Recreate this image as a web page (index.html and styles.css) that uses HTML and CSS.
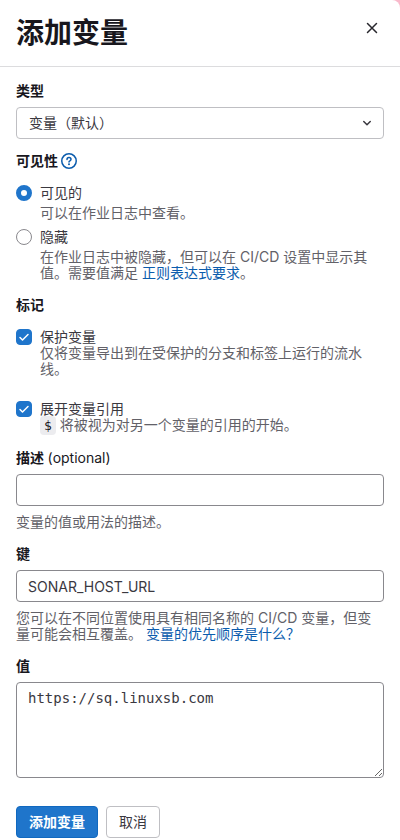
FILE: index.html
```html
<!DOCTYPE html>
<html lang="zh-CN">
<head>
    <meta charset="UTF-8">
    <meta name="viewport" content="width=device-width, initial-scale=1.0">
    <title>添加变量</title>
    <link rel="stylesheet" href="styles.css">
</head>
<body>
    <div class="drawer">
        <header class="drawer-header">
            <h1>添加变量</h1>
            <button type="button" class="close-button" aria-label="关闭">
                <svg width="16" height="16" viewBox="0 0 16 16" fill="none" stroke="currentColor" stroke-width="1.5" stroke-linecap="round">
                    <path d="M3.5 3.5l9 9M12.5 3.5l-9 9"/>
                </svg>
            </button>
        </header>

        <form class="drawer-body">
            <div class="form-group type-group">
                <label class="form-label" for="type">类型</label>
                <div class="select-wrapper">
                    <select id="type" class="form-control form-select">
                        <option>变量（默认）</option>
                    </select>
                    <svg class="select-icon" width="16" height="16" viewBox="0 0 16 16" fill="none" stroke="currentColor" stroke-width="1.5" stroke-linecap="round" stroke-linejoin="round">
                        <path d="M4.75 6.5L8 9.75l3.25-3.25"/>
                    </svg>
                </div>
            </div>

            <fieldset class="form-group">
                <legend class="form-legend">
                    可见性
                    <a href="#" class="help-link" aria-label="帮助">
                        <svg width="16" height="16" viewBox="0 0 16 16" fill="none" stroke="currentColor" stroke-width="1.5">
                            <circle cx="8" cy="8" r="7.25"/>
                            <path d="M6 6.4c0-1.1.9-1.9 2-1.9s2 .8 2 1.8c0 .8-.5 1.2-1.1 1.6-.6.3-.9.6-.9 1.2" stroke-linecap="round"/>
                            <circle cx="8" cy="11.3" r="1" fill="currentColor" stroke="none"/>
                        </svg>
                    </a>
                </legend>
                <div class="option-list">
                    <div class="option option-radio">
                        <input type="radio" id="visible" name="visibility" checked>
                        <label for="visible">可见的</label>
                        <p class="help-text">可以在作业日志中查看。</p>
                    </div>
                    <div class="option option-radio">
                        <input type="radio" id="masked" name="visibility">
                        <label for="masked">隐藏</label>
                        <p class="help-text">在作业日志中被隐藏，但可以在 CI/CD 设置中显示其值。需要值满足 <a href="#">正则表达式要求</a>。</p>
                    </div>
                </div>
            </fieldset>

            <fieldset class="form-group">
                <legend class="form-legend">标记</legend>
                <div class="option-list flags">
                    <div class="option">
                        <input type="checkbox" id="protected" checked>
                        <label for="protected">保护变量</label>
                        <p class="help-text">仅将变量导出到在受保护的分支和标签上运行的流水线。</p>
                    </div>
                    <div class="option">
                        <input type="checkbox" id="expanded" checked>
                        <label for="expanded">展开变量引用</label>
                        <p class="help-text"><code>$</code> 将被视为对另一个变量的引用的开始。</p>
                    </div>
                </div>
            </fieldset>

            <div class="form-group">
                <label class="form-label" for="description">描述 <span class="optional">(optional)</span></label>
                <input type="text" id="description" class="form-control">
                <p class="help-text">变量的值或用法的描述。</p>
            </div>

            <div class="form-group">
                <label class="form-label" for="key">键</label>
                <input type="text" id="key" class="form-control" value="SONAR_HOST_URL">
                <p class="help-text">您可以在不同位置使用具有相同名称的 CI/CD 变量，但变量可能会相互覆盖。 <a href="#">变量的优先顺序是什么？</a></p>
            </div>

            <div class="form-group">
                <label class="form-label" for="value">值</label>
                <textarea id="value" class="form-control value-input" spellcheck="false">https://sq.linuxsb.com</textarea>
            </div>

            <div class="actions">
                <button type="button" class="btn btn-confirm">添加变量</button>
                <button type="button" class="btn">取消</button>
            </div>
        </form>
    </div>
</body>
</html>
```
FILE: styles.css
```css
* {
    box-sizing: border-box;
}
body {
    margin: 0;
    background-color: #f9b9cb;
    font-family: Inter, 'Noto Sans CJK SC', sans-serif;
    font-size: 14px;
    line-height: 16px;
    color: #3a383f;
}
.drawer {
    min-height: 100vh;
    background: #fff;
    border-top-right-radius: 8px;
}
.drawer-header {
    display: flex;
    justify-content: space-between;
    align-items: flex-start;
    padding: 16px;
    border-bottom: 1px solid #dcdcde;
}
h1 {
    margin: 0;
    font-size: 28px;
    line-height: 34px;
    font-weight: 600;
    color: #18171d;
}
.close-button {
    display: flex;
    padding: 4px;
    border: 0;
    background: none;
    color: #28272d;
}
.drawer-body {
    padding: 16px 16px 2px;
}
.form-group {
    min-width: 0;
    margin: 0 0 16px;
    padding: 0;
    border: 0;
}
.type-group {
    margin-bottom: 14px;
}
.form-label {
    display: block;
    margin-bottom: 8px;
    font-weight: 600;
    color: #18171d;
}
.form-legend {
    display: flex;
    align-items: center;
    gap: 3px;
    margin-bottom: 16px;
    padding: 0;
    font-weight: 600;
    color: #18171d;
}
.optional {
    font-weight: 400;
}
.help-link {
    display: flex;
}
a {
    color: #0b5cad;
    text-decoration: none;
}
.form-control {
    display: block;
    width: 100%;
    height: 32px;
    padding: 0 11px;
    border: 1px solid #89888d;
    border-radius: 4px;
    background: #fff;
    color: #3a383f;
    font: inherit;
}
.select-wrapper {
    display: grid;
    align-items: center;
}
.form-select {
    grid-area: 1 / 1;
    padding: 0 12px;
    border-color: #bfbfc3;
    appearance: none;
}
.select-icon {
    grid-area: 1 / 1;
    justify-self: end;
    margin-right: 9px;
    pointer-events: none;
}
.help-text {
    margin: 8px 0 0;
    color: #626168;
}
.option-list {
    display: grid;
    gap: 8px;
}
.flags {
    gap: 24px;
}
.option {
    display: grid;
    grid-template-columns: 16px 1fr;
    column-gap: 8px;
}
.option-radio {
    row-gap: 4px;
}
.option .help-text {
    grid-column: 2;
    margin: 0;
}
.option input {
    width: 16px;
    height: 16px;
    margin: 0;
    border: 1px solid #89888d;
    background: #fff;
    appearance: none;
}
.option input[type="radio"] {
    border-radius: 50%;
}
.option input[type="radio"]:checked {
    border: 5px solid #1f75cb;
}
.option input[type="checkbox"] {
    border-radius: 4px;
}
.option input[type="checkbox"]:checked {
    border-color: #1f75cb;
    background: #1f75cb url("data:image/svg+xml,%3Csvg xmlns='http://www.w3.org/2000/svg' viewBox='0 0 14 14'%3E%3Cpath d='M3 7.5l2.5 2.5L11 4.5' fill='none' stroke='white' stroke-width='1.5' stroke-linecap='round' stroke-linejoin='round'/%3E%3C/svg%3E");
}
code {
    padding: 2px 4px;
    border-radius: 4px;
    background: #ececef;
    color: #18171d;
    font-family: 'DejaVu Sans Mono', monospace;
    font-size: 13px;
}
.value-input {
    height: 96px;
    padding: 7px 11px;
    font-family: 'DejaVu Sans Mono', monospace;
}
.actions {
    display: flex;
    gap: 8px;
    margin-top: 28px;
}
.btn {
    height: 32px;
    padding: 0 12px;
    border: 1px solid #bfbfc3;
    border-radius: 4px;
    background: #fff;
    color: #3a383f;
    font: inherit;
}
.btn-confirm {
    border-color: #1068bf;
    background: #1f75cb;
    color: #fff;
    font-weight: 600;
}
```
